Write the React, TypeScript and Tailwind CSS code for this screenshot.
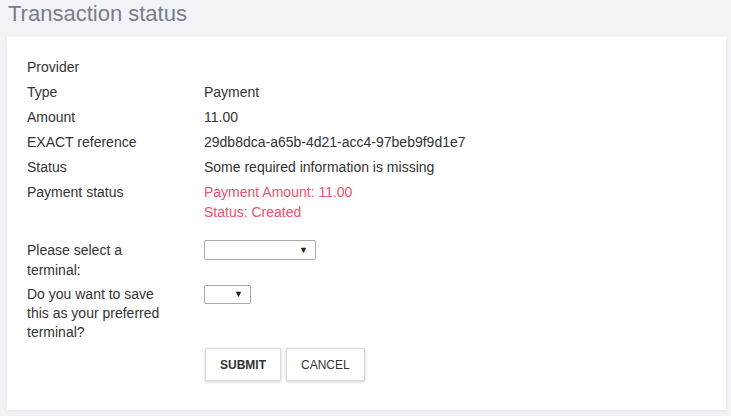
import React from 'react'

const rows: [string, string][] = [
  ['Provider', ''],
  ['Type', 'Payment'],
  ['Amount', '11.00'],
  ['EXACT reference', '29db8dca-a65b-4d21-acc4-97beb9f9d1e7'],
  ['Status', 'Some required information is missing'],
]

function FakeSelect({ width, height }: { width: string; height: string }) {
  return (
    <div
      className={`${width} ${height} flex items-center justify-end pr-[7px] border border-[#a9a9a9] rounded-[2px] bg-white`}
    >
      <span className="text-[9px] leading-none text-[#222]">▼</span>
    </div>
  )
}

export default function App() {
  return (
    <div className="min-h-[416px] bg-[#f2f3f6] pl-[7px] pr-[5px] pb-[5px] font-['Liberation_Sans',Arial,sans-serif] text-[14px] text-[#333]">
      <h1 className="pl-[1px] text-[22px] leading-[28px] mb-[9px] text-[#767e8b]">Transaction status</h1>

      <div className="bg-white shadow-[0_1px_3px_rgba(0,0,0,0.06)] pt-[20px] pb-[29px] pl-[20px] pr-[20px]">
        {rows.map(([label, value]) => (
          <div key={label} className="grid grid-cols-[145px_1fr] gap-x-[32px] leading-5 mb-[5px]">
            <div>{label}</div>
            <div>{value}</div>
          </div>
        ))}
        <div className="grid grid-cols-[145px_1fr] gap-x-[32px] leading-5">
          <div>Payment status</div>
          <div className="text-[#f0506e]">
            <div>Payment Amount: 11.00</div>
            <div>Status: Created</div>
          </div>
        </div>

        <div className="grid grid-cols-[145px_1fr] gap-x-[32px] leading-5 mt-[18px] mb-[5px]">
          <div>Please select a terminal:</div>
          <div>
            <FakeSelect width="w-[112px]" height="h-[20px]" />
          </div>
        </div>
        <div className="grid grid-cols-[145px_1fr] gap-x-[32px] leading-[19px]">
          <div>Do you want to save this as your preferred terminal?</div>
          <div>
            <FakeSelect width="w-[47px]" height="h-[19px]" />
          </div>
        </div>

        <div className="grid grid-cols-[145px_1fr] gap-x-[32px] mt-[6px]">
          <div />
          <div className="flex gap-[5px] pl-[1px]">
            <button className="h-[33px] px-[14px] bg-white border border-[#dcdcdc] shadow-[0_1px_3px_rgba(0,0,0,0.2)] text-[12px] font-bold text-[#333]">
              SUBMIT
            </button>
            <button className="h-[33px] px-[14px] bg-white border border-[#dcdcdc] shadow-[0_1px_3px_rgba(0,0,0,0.2)] text-[12px] text-[#333]">
              CANCEL
            </button>
          </div>
        </div>
      </div>
    </div>
  )
}
